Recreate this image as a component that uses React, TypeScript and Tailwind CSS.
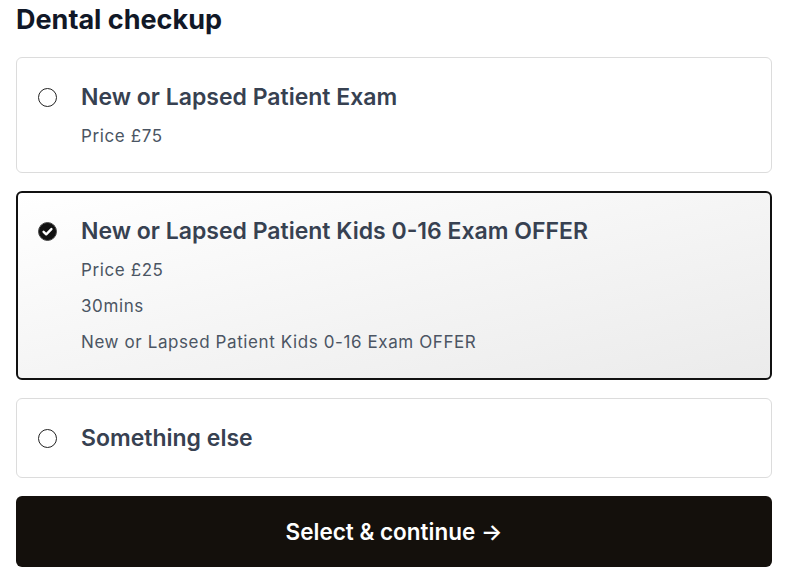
import { useState } from 'react';

const OPTIONS = [
  {
    id: 'new',
    title: 'New or Lapsed Patient Exam',
    lines: ['Price £75'],
  },
  {
    id: 'kids',
    title: 'New or Lapsed Patient Kids 0-16 Exam OFFER',
    lines: ['Price £25', '30mins', 'New or Lapsed Patient Kids 0-16 Exam OFFER'],
  },
  {
    id: 'other',
    title: 'Something else',
    lines: [],
  },
];

const RadioMark = ({ checked }: { checked: boolean }) =>
  checked ? (
    <svg width="19" height="19" viewBox="0 0 19 19" className="shrink-0">
      <circle cx="9.5" cy="9.5" r="9" fill="#111111" stroke="#4a4a4a" strokeWidth="1" />
      <path d="M5.6 9.8l2.6 2.5 5.2-5.2" fill="none" stroke="white" strokeWidth="2.4" strokeLinecap="round" strokeLinejoin="round" />
    </svg>
  ) : (
    <span className="block w-[19px] h-[19px] shrink-0 rounded-full border-[1.5px] border-[#222] bg-white" />
  );

export default function App() {
  const [selected, setSelected] = useState('kids');

  return (
    <div className="w-[785px] h-[583px] bg-white px-4 font-['Inter',sans-serif]">
      <h2 className="pt-[3px] text-[27px] leading-[34px] font-bold text-[#111827]">
        Dental checkup
      </h2>

      <div className="mt-[20px] w-[756px] flex flex-col gap-[18px]">
        {OPTIONS.map((opt) => {
          const checked = opt.id === selected;
          const hasLines = opt.lines.length > 0;
          return (
            <div
              key={opt.id}
              onClick={() => setSelected(opt.id)}
              className={`cursor-pointer rounded-[6px] pr-6 ${
                checked
                  ? 'border-2 border-[#111] bg-gradient-to-br from-white to-[#ebebeb] pl-[20px] pt-[24px] pb-[24px]'
                  : `border border-[#dcdcdc] bg-white pl-[21px] pt-[25px] ${hasLines ? 'pb-[24px]' : 'pb-[25px]'}`
              }`}
            >
              <div className="flex items-center gap-[24px] h-[28px]">
                <RadioMark checked={checked} />
                <span className="text-[23px] leading-[28px] font-semibold text-[#374151]">
                  {opt.title}
                </span>
              </div>
              {hasLines && (
                <div className="mt-[13px] pl-[43px] flex flex-col gap-[12px]">
                  {opt.lines.map((line, i) => (
                    <p key={i} className="text-[17px] leading-[24px] tracking-[0.6px] text-[#4b5563]">
                      {line}
                    </p>
                  ))}
                </div>
              )}
            </div>
          );
        })}

        <button className="h-[71px] w-full rounded-[6px] bg-[#14100c] text-white text-[22.5px] font-semibold">
          Select &amp; continue →
        </button>
      </div>
    </div>
  );
}
